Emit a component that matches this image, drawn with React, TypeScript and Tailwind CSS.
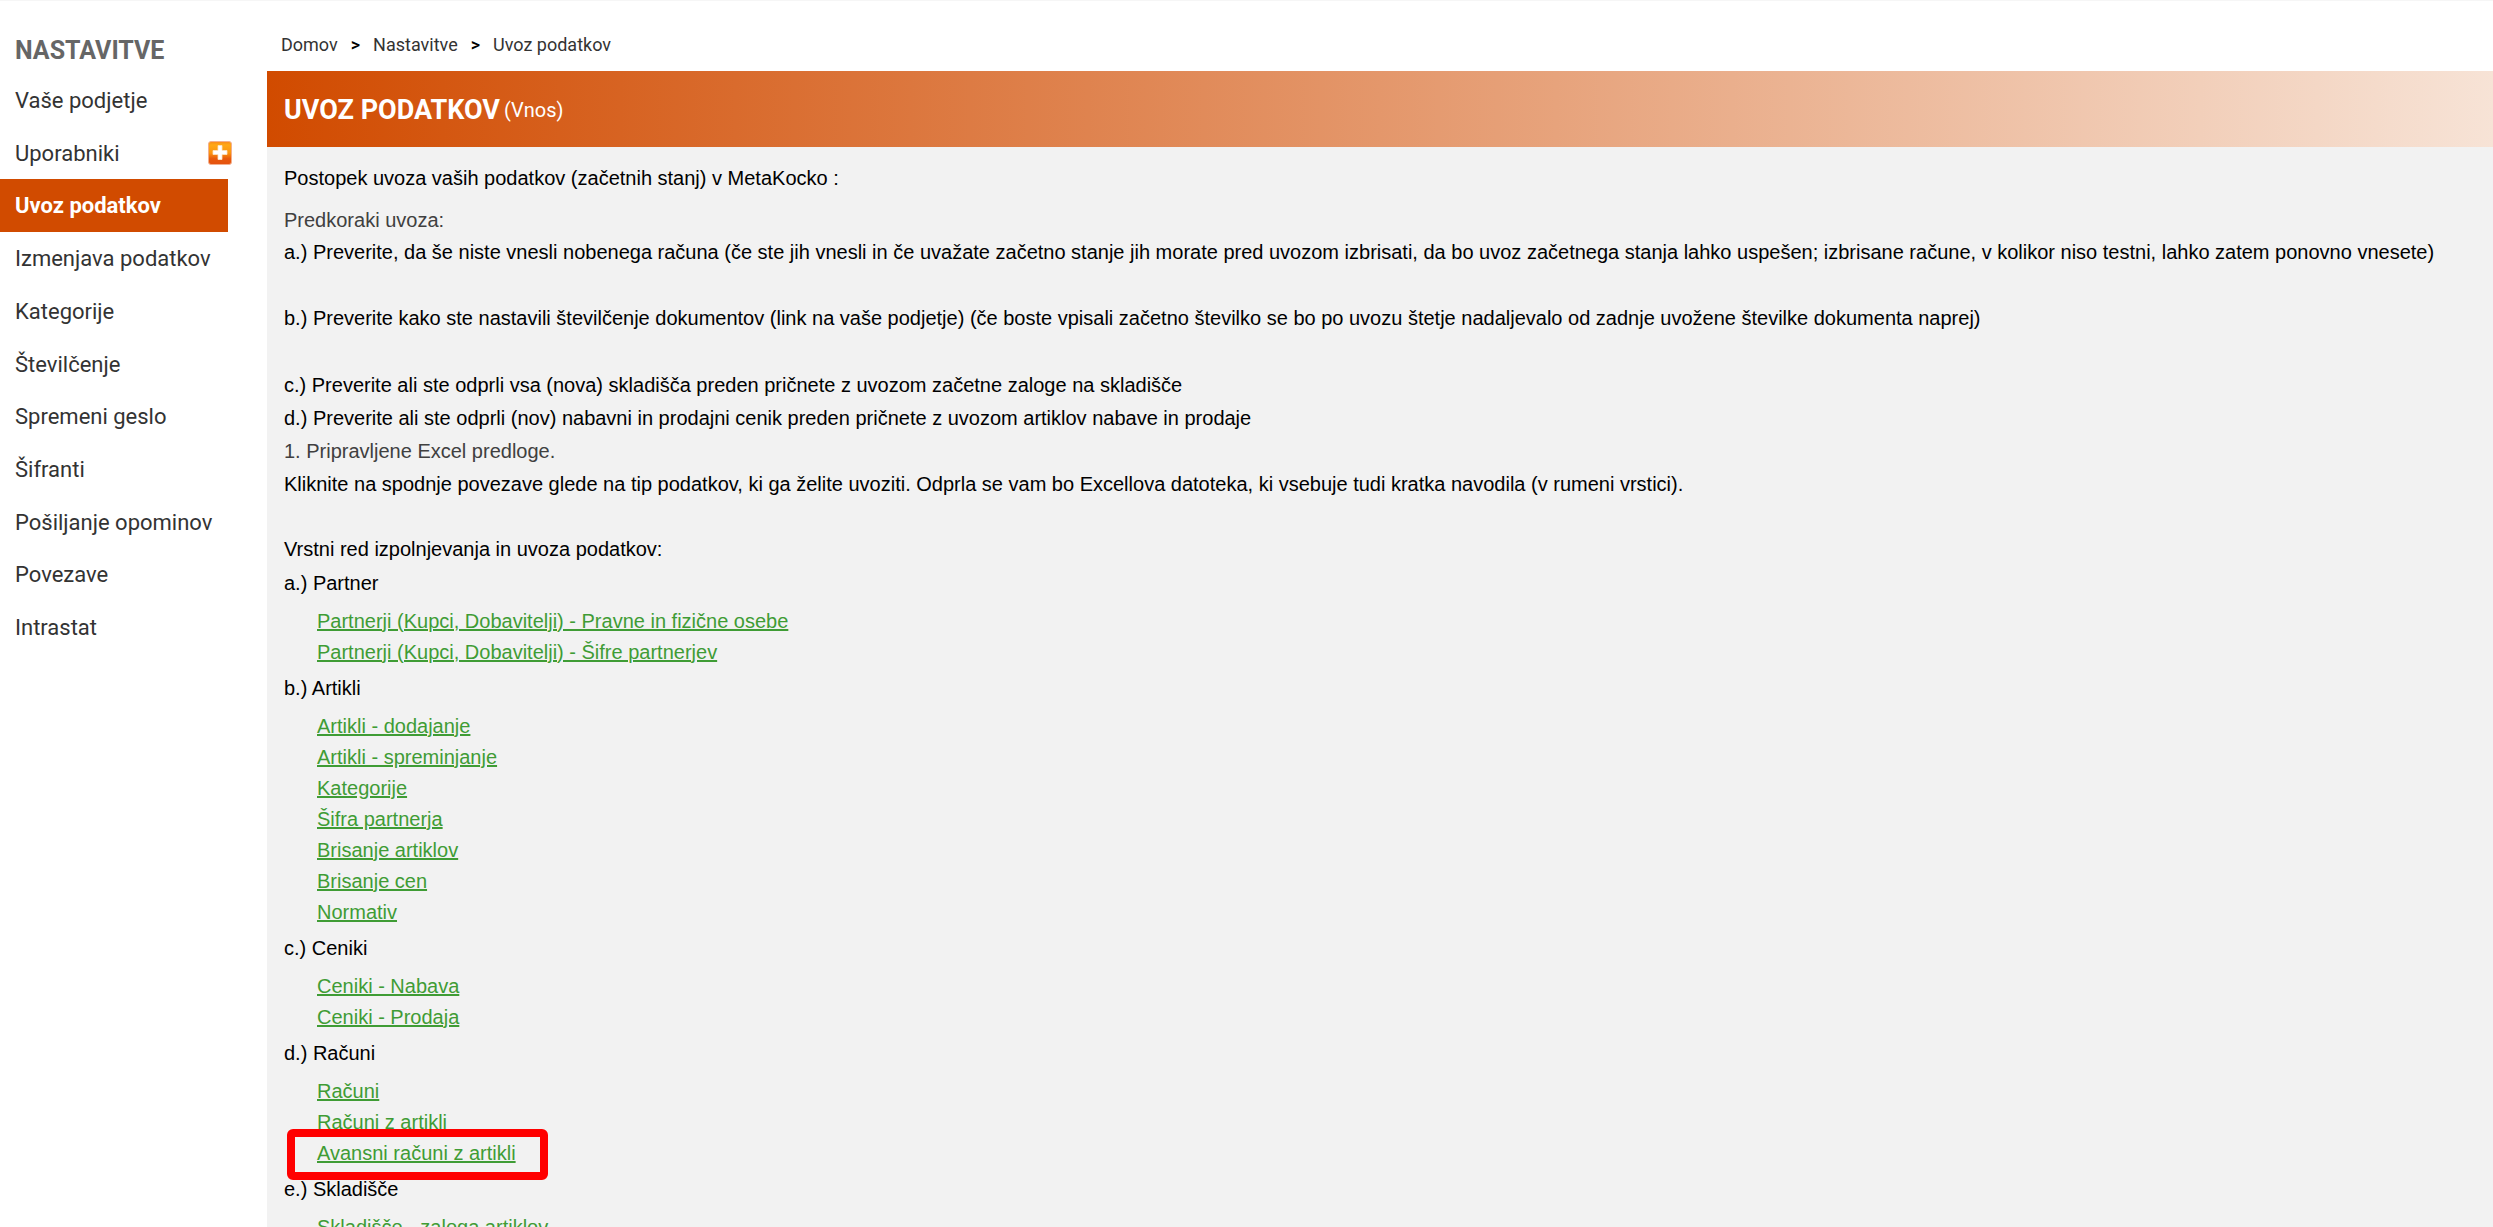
import React from "react";

const menu = [
  "Vaše podjetje",
  "Uporabniki",
  "Uvoz podatkov",
  "Izmenjava podatkov",
  "Kategorije",
  "Številčenje",
  "Spremeni geslo",
  "Šifranti",
  "Pošiljanje opominov",
  "Povezave",
  "Intrastat",
];

const groups = [
  {
    title: "a.) Partner",
    links: [
      "Partnerji (Kupci, Dobavitelji) - Pravne in fizične osebe",
      "Partnerji (Kupci, Dobavitelji) - Šifre partnerjev",
    ],
  },
  {
    title: "b.) Artikli",
    links: [
      "Artikli - dodajanje",
      "Artikli - spreminjanje",
      "Kategorije",
      "Šifra partnerja",
      "Brisanje artiklov",
      "Brisanje cen",
      "Normativ",
    ],
  },
  { title: "c.) Ceniki", links: ["Ceniki - Nabava", "Ceniki - Prodaja"] },
  { title: "d.) Računi", links: ["Računi", "Računi z artikli", "Avansni računi z artikli"] },
  { title: "e.) Skladišče", links: ["Skladišče - zaloga artiklov"] },
];

const highlighted = "Avansni računi z artikli";

function AddIcon() {
  return (
    <svg viewBox="0 0 24 24" className="size-6" aria-hidden="true">
      <defs>
        <linearGradient id="add-fill" x1="0" y1="0" x2="0" y2="1">
          <stop offset="0" stopColor="#f98a1a" />
          <stop offset="0.15" stopColor="#ffa814" />
          <stop offset="0.5" stopColor="#fb9410" />
          <stop offset="0.75" stopColor="#e8590c" />
          <stop offset="1" stopColor="#e4520f" />
        </linearGradient>
      </defs>
      <rect x="0.5" y="0.5" width="23" height="23" rx="2.5" fill="url(#add-fill)" stroke="#f3b08e" />
      <path d="M10 4.5h4v5h5v4h-5v5h-4v-5H5v-4h5z" fill="#fff" stroke="#fde3c4" strokeWidth="0.8" />
    </svg>
  );
}

function Sidebar() {
  return (
    <aside className="w-[267px] shrink-0 pt-[27px]">
      <h2 className="pl-[15px] text-[25px] leading-[46px] font-bold text-[#666]">NASTAVITVE</h2>
      <ul className="flex h-[580px] w-[228px] flex-col text-[22px] text-[#333]">
        {menu.map((label) => {
          const active = label === "Uvoz podatkov";
          return (
            <li
              key={label}
              className={
                active
                  ? "relative flex flex-1 items-center bg-[#d14b00] pl-[15px] font-bold text-white"
                  : "relative flex flex-1 items-center pl-[15px]"
              }
            >
              <a href="#" className="whitespace-nowrap">
                {label}
              </a>
              {label === "Uporabniki" && (
                <button type="button" aria-label="Dodaj uporabnika" className="absolute top-[14px] -right-1">
                  <AddIcon />
                </button>
              )}
            </li>
          );
        })}
      </ul>
    </aside>
  );
}

export default function App() {
  return (
    <div className="flex h-screen overflow-hidden border-t border-[#f6f6f6] bg-white font-['Roboto',sans-serif]">
      <Sidebar />
      <main className="min-w-0 flex-1">
        <nav aria-label="Pot" className="flex h-[70px] items-center gap-[13px] pt-[18px] pl-[14px] text-lg text-[#333]">
          <a href="#">Domov</a>
          <span className="font-medium text-black">&gt;</span>
          <a href="#">Nastavitve</a>
          <span className="font-medium text-black">&gt;</span>
          <a href="#">Uvoz podatkov</a>
        </nav>
        <header className="flex h-[76px] items-center gap-1 bg-linear-to-r/srgb from-[#d14b00] to-[#f7e3d6] pt-[2px] pl-[17px] text-white">
          <h1 className="text-[27px] font-bold">UVOZ PODATKOV</h1>
          <span className="text-xl">(Vnos)</span>
        </header>
        <div className="bg-[#f2f2f2] pt-[15px] pb-8 pl-[17px] font-['Liberation_Sans',sans-serif] text-[20px] leading-[33px] text-black">
          <p className="mb-[10px]">Postopek uvoza vaših podatkov (začetnih stanj) v MetaKocko :</p>
          <p className="leading-[31px] text-[#404040]">Predkoraki uvoza:</p>
          <p className="mb-[33px]">
            a.) Preverite, da še niste vnesli nobenega računa (če ste jih vnesli in če uvažate začetno stanje jih morate
            pred uvozom izbrisati, da bo uvoz začetnega stanja lahko uspešen; izbrisane račune, v kolikor niso testni,
            lahko zatem ponovno vnesete)
          </p>
          <p className="mb-[34px]">
            b.) Preverite kako ste nastavili številčenje dokumentov (link na vaše podjetje) (če boste vpisali začetno
            številko se bo po uvozu štetje nadaljevalo od zadnje uvožene številke dokumenta naprej)
          </p>
          <p>c.) Preverite ali ste odprli vsa (nova) skladišča preden pričnete z uvozom začetne zaloge na skladišče</p>
          <p>d.) Preverite ali ste odprli (nov) nabavni in prodajni cenik preden pričnete z uvozom artiklov nabave in prodaje</p>
          <p className="text-[#404040]">1. Pripravljene Excel predloge.</p>
          <p className="mb-[33px] leading-[32px]">
            Kliknite na spodnje povezave glede na tip podatkov, ki ga želite uvoziti. Odprla se vam bo Excellova
            datoteka, ki vsebuje tudi kratka navodila (v rumeni vrstici).
          </p>
          <p className="mb-px">Vrstni red izpolnjevanja in uvoza podatkov:</p>
          {groups.map((g) => (
            <section key={g.title}>
              <h3>{g.title}</h3>
              <ul className="mt-[6px] mb-1 pl-[33px] leading-[31px]">
                {g.links.map((l) => (
                  <li key={l} className="relative">
                    <a href="#" className="text-[#3f9c35] underline decoration-2 underline-offset-1">
                      {l}
                    </a>
                    {l === highlighted && (
                      <span className="pointer-events-none absolute -top-[9px] -left-[30px] h-[51px] w-[261px] rounded-md border-8 border-[#ff0000]" />
                    )}
                  </li>
                ))}
              </ul>
            </section>
          ))}
        </div>
      </main>
    </div>
  );
}
